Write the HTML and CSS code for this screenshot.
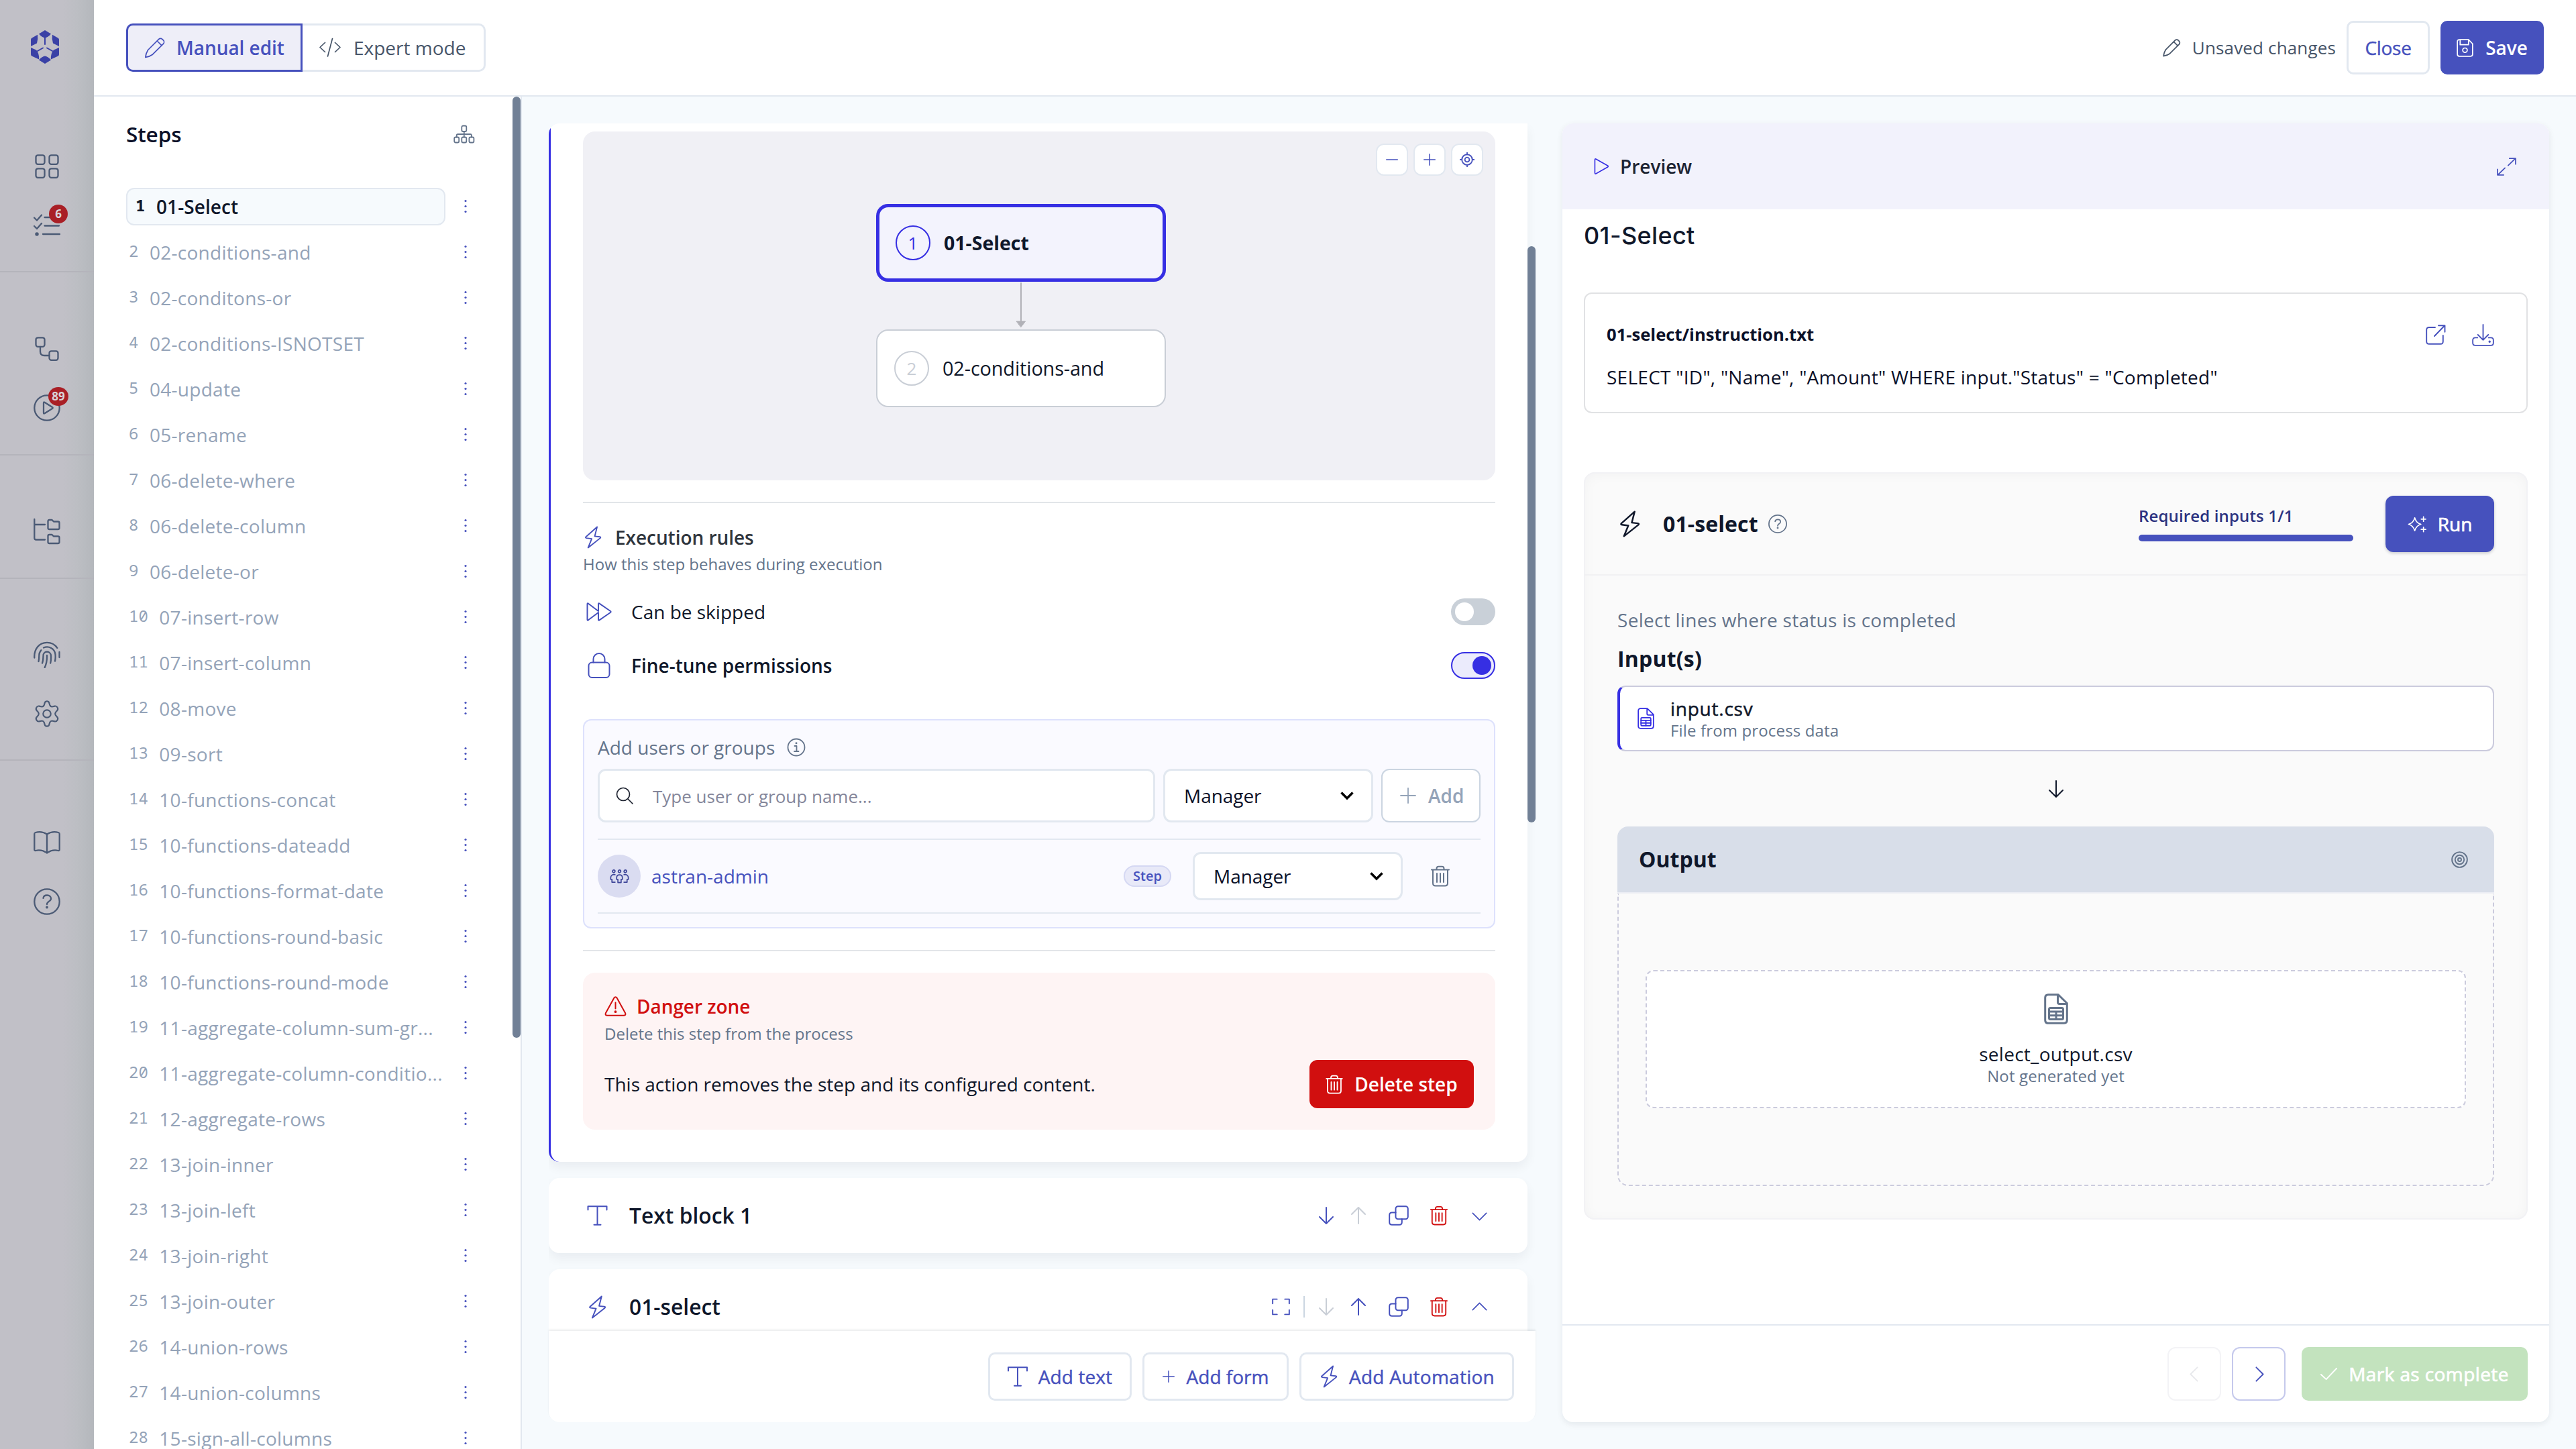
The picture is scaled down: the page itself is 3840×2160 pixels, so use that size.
FILE: index.html
```html
<!DOCTYPE html>
<html lang="en">
<head>
<meta charset="utf-8">
<title>Process editor</title>
<link rel="stylesheet" href="styles.css">
</head>
<body>
<svg class="defs" aria-hidden="true">
  <symbol id="pencil" viewBox="0 0 32 32"><path d="M21.500 3.600a3.900 3.900 0 0 1 5.600 0l1.300 1.300a3.900 3.900 0 0 1 0 5.500L12.500 26.200Q8 29.500 1.800 30.300 2.300 25 5.600 19.500zM19.200 6l6.900 6.800"/></symbol>
  <symbol id="code" viewBox="0 0 32 32"><path d="M8.500 8.500 1 15.500l7.500 7M23.500 8.500l7.500 7-7.500 7M19.500 2.500 12.500 29"/></symbol>
  <symbol id="tree" viewBox="0 0 32 28"><rect x="12.300" y="1.500" width="7" height="8.500" rx="2"/><rect x="1.200" y="18.500" width="7" height="8" rx="2"/><rect x="12.300" y="18.500" width="7" height="8" rx="2"/><rect x="23.400" y="18.500" width="7" height="8" rx="2"/><path d="M15.800 10v8.500M4.700 18.500v-2.500q0-2 2-2h18.200q2 0 2 2v2.500"/></symbol>
  <symbol id="dots" viewBox="0 0 8 22"><g fill="currentColor" stroke="none"><circle cx="4" cy="2.500" r="1.600"/><circle cx="4" cy="10.500" r="1.600"/><circle cx="4" cy="18.500" r="1.600"/></g></symbol>
  <symbol id="bolt" viewBox="0 0 32 36"><path d="M22.500 1.500 4.800 17.200q-1.500 1.500.8 2l8.400 1.100L8.200 34.500 27.500 19.200q1.500-1.500-.8-2l-8-.9z"/></symbol>
  <symbol id="plus" viewBox="0 0 24 24"><path d="M12 1v22M1 12h22"/></symbol>
  <symbol id="minus" viewBox="0 0 24 24"><path d="M1 12h22"/></symbol>
  <symbol id="locate" viewBox="0 0 24 24"><circle cx="12" cy="12" r="8.500"/><circle cx="12" cy="12" r="3.700"/><path d="M12 .5v3M12 20.500v3M.5 12h3M20.500 12h3"/></symbol>
  <symbol id="skip" viewBox="0 0 40 32"><path d="M2.500 4.500v23q0 1.800 1.500.8L19 17V27.500q0 1.800 1.500.8L37 17q1.200-1 0-2L20.500 3.700Q19 2.700 19 4.500V15L4 3.700Q2.500 2.700 2.500 4.500z"/></symbol>
  <symbol id="lock" viewBox="0 0 36 40"><rect x="2.500" y="15.500" width="31" height="22.500" rx="5"/><path d="M9.500 15.500V10.500a8.500 8.500 0 0 1 17 0v5"/></symbol>
  <symbol id="info" viewBox="0 0 28 28"><circle cx="14" cy="14" r="12.500"/><path d="M11.500 12h3v8M11 20h6.500"/><circle cx="14" cy="7.800" r=".6" fill="currentColor"/></symbol>
  <symbol id="search" viewBox="0 0 26 26"><circle cx="11" cy="11" r="9.500"/><path d="M18 18l7 7"/></symbol>
  <symbol id="caret" viewBox="0 0 20 14"><path d="M1.500 2.500 10 11l8.500-8.500"/></symbol>
  <symbol id="people" viewBox="0 0 30 22"><circle cx="6" cy="3" r="2"/><circle cx="15" cy="3" r="2"/><circle cx="24" cy="3" r="2"/><path d="M15 8.500c-3 0-4.500 2-4.500 4.500v2.500h2v5h5v-5h2V13c0-2.500-1.500-4.500-4.500-4.500zM8 8.200C4 7.500 1.200 9.500 1.200 13v2.500h2V20H8M22 8.200c4-.7 6.800 1.300 6.800 4.800v2.500h-2V20H22"/></symbol>
  <symbol id="trash" viewBox="0 0 28 32"><path d="M1 6.500h26M8.500 6.500V5q0-3.200 3-3.200h5q3 0 3 3.200v1.500M3 6.500v20q0 4 4 4h14q4 0 4-4v-20M9 12v13M14 12v13M19 12v13"/></symbol>
  <symbol id="warn" viewBox="0 0 32 30"><path d="M13.800 2.700q2.200-3 4.400 0L30.500 25q1.500 3.500-2 3.700H3.500Q0 28.500 1.500 25zM16 9.500v9"/><circle cx="16" cy="23.200" r=".9" fill="currentColor"/></symbol>
  <symbol id="letter" viewBox="0 0 30 30"><path d="M1 6.500V1.200h28V6.500M15 1.200v27.500M10 28.700h10"/></symbol>
  <symbol id="down" viewBox="0 0 22 26"><path d="M11 1v24M1 15l10 10 10-10"/></symbol>
  <symbol id="up" viewBox="0 0 22 26"><path d="M11 25V1M1 11 11 1l10 10"/></symbol>
  <symbol id="copy" viewBox="0 0 30 30"><rect x="10.500" y="1.200" width="18.300" height="19" rx="3.500"/><path d="M10.500 10.500H5q-3.800 0-3.800 3.800V25q0 3.800 3.800 3.800h11q3.800 0 3.800-3.800v-4.800"/></symbol>
  <symbol id="chev" viewBox="0 0 24 14"><path d="M1 1.500l11 11 11-11"/></symbol>
  <symbol id="frame" viewBox="0 0 28 26"><path d="M1.200 8V1.200H8M20 1.200h6.800V8M26.800 18v6.800H20M8 24.800H1.200V18"/></symbol>
  <symbol id="save" viewBox="0 0 26 28"><path d="M1.200 4.500q0-3.300 3.300-3.300h14l6.300 6.300V24q0 2.800-2.800 2.800H4Q1.200 26.800 1.200 24z"/><path d="M5.500 1.500V9h13V1.500"/><circle cx="13" cy="17.500" r="3.500"/></symbol>
  <symbol id="play" viewBox="0 0 24 26"><path d="M1.500 3v20q0 2.300 2 1.200L21.500 14q1.500-1 0-2L3.500 1.800Q1.500.7 1.500 3z"/></symbol>
  <symbol id="expand" viewBox="0 0 30 28"><path d="M19.500 1.200H29V10M28.500 1.500 17.500 12M1 18v8.800h9.500M1.500 26.500l11-10.500"/></symbol>
  <symbol id="external" viewBox="0 0 30 30"><path d="M14 4H5Q1.200 4 1.200 7.800V25q0 3.800 3.800 3.800h17q3.800 0 3.800-3.800V16M19 1.200h9.500v9.500M28 1.500 13 17"/></symbol>
  <symbol id="download" viewBox="0 0 34 34"><path d="M17 1v23M9 16.500l8 8 8-8M8.500 21H5q-3.800 0-3.800 3.800V29q0 3.800 3.800 3.800h24q3.800 0 3.800-3.800v-4.200Q32.800 21 29 21h-3.500"/><circle cx="27" cy="27" r=".8" fill="currentColor"/></symbol>
  <symbol id="help" viewBox="0 0 40 40"><circle cx="20" cy="20" r="18.700"/><path d="M14.500 14.800c.4-3 2.800-4.300 5.700-4.300 3.300 0 5.800 1.800 5.800 4.900 0 4.600-6 3.900-6 8.600"/><circle cx="20" cy="28.500" r=".8" fill="currentColor"/></symbol>
  <symbol id="sparkle" viewBox="0 0 30 28"><path d="M11 4c1.500 5.500 4 8.500 9.500 10-5.500 1.500-8 4.500-9.500 10-1.500-5.500-4-8.500-9.500-10C7 12.500 9.500 9.500 11 4zM24.500 2.500v7M21 6h7M24.500 18.500v7M21 22h7"/></symbol>
  <symbol id="sheet" viewBox="0 0 36 46"><path d="M1.700 6.500q0-4.800 4.800-4.800H21L34.300 14.500V39.500q0 4.800-4.800 4.800H6.500q-4.800 0-4.800-4.800zM20.500 1.700V13q0 2.500 2.500 2.500h11.300"/><rect x="7.500" y="21.500" width="21" height="17" rx="2"/><path d="M7.500 27h21M7.500 32.700h21M18 27v11.500"/></symbol>
  <symbol id="target" viewBox="0 0 26 26"><circle cx="13" cy="13" r="11.800"/><circle cx="13" cy="13" r="7"/><circle cx="13" cy="13" r="2.600"/></symbol>
  <symbol id="tick" viewBox="0 0 26 20"><path d="M1 11l8 7.500L25 1.500"/></symbol>
  <symbol id="grid" viewBox="0 0 40 40"><rect x="3.500" y="3.300" width="13" height="13.500" rx="3"/><rect x="23.500" y="3.300" width="13" height="13.500" rx="3"/><rect x="3.500" y="23.300" width="13" height="13.500" rx="3"/><rect x="23.500" y="23.300" width="13" height="13.500" rx="3"/></symbol>
  <symbol id="tasks" viewBox="0 0 40 40"><path d="M1 6.500l4 4 7-8M1 19l4 4 7-8M16.500 6H38M16.500 18.500H38M14 31h25"/><circle cx="5" cy="31" r="1.600" fill="currentColor"/></symbol>
  <symbol id="flow" viewBox="0 0 40 40"><rect x="3.500" y="3.300" width="13" height="13.500" rx="3"/><rect x="23.500" y="23.300" width="13" height="13.500" rx="3"/><path d="M10 16.800V24q0 6 6 6h7.500"/></symbol>
  <symbol id="playc" viewBox="0 0 40 40"><circle cx="20" cy="20" r="18.700"/><path d="M15 12.500v15q0 1.500 1.500.8L28 21q1.500-1 0-2l-11.500-7.300q-1.500-.7-1.500.8z"/></symbol>
  <symbol id="folders" viewBox="0 0 40 40"><path d="M1.300 2v28q0 2.500 2.500 2.500H17M1.300 10H17M21.500 5q0-2 2-2h4l2.500 2.500h6.500q2 0 2 2V15q0 2-2 2h-13q-2 0-2-2zM21.500 27q0-2 2-2h4l2.500 2.500h6.500q2 0 2 2V36q0 2-2 2h-13q-2 0-2-2z"/></symbol>
  <symbol id="finger" viewBox="0 0 40 40"><path d="M1.300 24.500C.5 12 8 1.800 20 1.800c6.500 0 12 3 15.300 8M38.500 16v8M7.500 30c.8-3 .8-5 .8-9 0-3.500 1-5.500 3-7.800M15 9.500c7.500-3 16.500 1 17.500 10 .3 4 .2 7-.5 10M13 32.500c1.500-4 1.500-7 1.500-11 0-8 11-8 11.500 0 .2 4 .1 7.500-.8 11M20 21c.3 7-1 13-3.300 18"/></symbol>
  <symbol id="gear" viewBox="0 0 40 42"><circle cx="20" cy="21" r="6"/><path d="M16.700 3.500q.7-2 3.300-2t3.300 2l1.200 4q.7 2 3.300 2.500l4.500-1q2.500-.5 4 2t0 4.500l-2.800 3.300q-1.300 2.200 0 4.400l2.800 3.300q1.500 2 0 4.500t-4 2l-4.500-1q-2.600.5-3.300 2.500l-1.200 4q-.7 2-3.300 2t-3.300-2l-1.200-4q-.7-2-3.300-2.500l-4.500 1q-2.500.5-4-2t0-4.500l2.800-3.300q1.300-2.200 0-4.400L3.700 15.500q-1.500-2 0-4.500t4-2l4.500 1q2.600-.5 3.300-2.500z"/></symbol>
  <symbol id="book" viewBox="0 0 40 40"><path d="M20 7.500Q12 2.500 3 5 1.300 5.500 1.300 7v23.500q0 2 2 1.500Q12 30 20 35.500q8-5.500 16.700-3.500 2 .5 2-1.500V7q0-1.500-1.700-2-9-2.500-17 2.500zV35"/></symbol>
  <symbol id="logo" viewBox="0 0 42 50"><g fill="currentColor" stroke="none"><path d="M12 5.500 21 0l9 5.500q-4 5-9 6-5-1-9-6zM0 14q0-1.500 1.300-2.300L10 6.800q1 6-1 12.700L0 24zM42 14q0-1.500-1.300-2.300L32 6.800q-1 6 1 12.700l9 4.500zM0 26l8 3.500q4.500 4.500 4.200 14L1.300 38.500Q0 37.500 0 36zM42 26l-8 3.500q-4.500 4.500-4.200 14L40.700 38.500Q42 37.500 42 36zM12 44.500l9 5.500 9-5.500q-4-5-9-6-5 1-9 6z"/></g><path d="M21 11v10M10 31l8-4.500M32 31l-8-4.500"/></symbol>
</svg>

<div class="app">
  <nav class="rail">
    <div class="rail-logo"><svg class="logo"><use href="#logo"/></svg></div>
    <div class="rail-group first">
      <span class="rail-item"><svg><use href="#grid"/></svg></span>
      <span class="rail-item tasks"><svg><use href="#tasks"/></svg><b class="badge">6</b></span>
    </div>
    <div class="rail-group second">
      <span class="rail-item"><svg><use href="#flow"/></svg></span>
      <span class="rail-item"><svg><use href="#playc"/></svg><b class="badge wide">89</b></span>
    </div>
    <div class="rail-group third">
      <span class="rail-item"><svg><use href="#folders"/></svg></span>
    </div>
    <div class="rail-group fourth">
      <span class="rail-item"><svg><use href="#finger"/></svg></span>
      <span class="rail-item"><svg><use href="#gear"/></svg></span>
    </div>
    <div class="rail-group fifth">
      <span class="rail-item"><svg><use href="#book"/></svg></span>
      <span class="rail-item"><svg><use href="#help"/></svg></span>
    </div>
  </nav>

  <div class="shell">
    <header class="topbar">
      <div class="modes">
        <button class="mode active"><svg class="i32"><use href="#pencil"/></svg><span>Manual edit</span></button>
        <button class="mode"><svg class="i32"><use href="#code"/></svg><span>Expert mode</span></button>
      </div>
      <div class="top-actions">
        <span class="unsaved"><svg class="i28"><use href="#pencil"/></svg><span>Unsaved changes</span></span>
        <button class="btn close">Close</button>
        <button class="btn save"><svg class="ic-save"><use href="#save"/></svg><span>Save</span></button>
      </div>
    </header>

    <div class="body">
      <aside class="steps">
        <div class="steps-head"><h2>Steps</h2><svg class="ic-tree"><use href="#tree"/></svg></div>
        <ol class="step-list">
          <li class="on"><div class="step"><i>1</i><span>01-Select</span></div><svg><use href="#dots"/></svg></li>
          <li><div class="step"><i>2</i><span>02-conditions-and</span></div><svg><use href="#dots"/></svg></li>
          <li><div class="step"><i>3</i><span>02-conditons-or</span></div><svg><use href="#dots"/></svg></li>
          <li><div class="step"><i>4</i><span>02-conditions-ISNOTSET</span></div><svg><use href="#dots"/></svg></li>
          <li><div class="step"><i>5</i><span>04-update</span></div><svg><use href="#dots"/></svg></li>
          <li><div class="step"><i>6</i><span>05-rename</span></div><svg><use href="#dots"/></svg></li>
          <li><div class="step"><i>7</i><span>06-delete-where</span></div><svg><use href="#dots"/></svg></li>
          <li><div class="step"><i>8</i><span>06-delete-column</span></div><svg><use href="#dots"/></svg></li>
          <li><div class="step"><i>9</i><span>06-delete-or</span></div><svg><use href="#dots"/></svg></li>
          <li><div class="step"><i>10</i><span>07-insert-row</span></div><svg><use href="#dots"/></svg></li>
          <li><div class="step"><i>11</i><span>07-insert-column</span></div><svg><use href="#dots"/></svg></li>
          <li><div class="step"><i>12</i><span>08-move</span></div><svg><use href="#dots"/></svg></li>
          <li><div class="step"><i>13</i><span>09-sort</span></div><svg><use href="#dots"/></svg></li>
          <li><div class="step"><i>14</i><span>10-functions-concat</span></div><svg><use href="#dots"/></svg></li>
          <li><div class="step"><i>15</i><span>10-functions-dateadd</span></div><svg><use href="#dots"/></svg></li>
          <li><div class="step"><i>16</i><span>10-functions-format-date</span></div><svg><use href="#dots"/></svg></li>
          <li><div class="step"><i>17</i><span>10-functions-round-basic</span></div><svg><use href="#dots"/></svg></li>
          <li><div class="step"><i>18</i><span>10-functions-round-mode</span></div><svg><use href="#dots"/></svg></li>
          <li><div class="step"><i>19</i><span>11-aggregate-column-sum-gr...</span></div><svg><use href="#dots"/></svg></li>
          <li><div class="step"><i>20</i><span>11-aggregate-column-conditio...</span></div><svg><use href="#dots"/></svg></li>
          <li><div class="step"><i>21</i><span>12-aggregate-rows</span></div><svg><use href="#dots"/></svg></li>
          <li><div class="step"><i>22</i><span>13-join-inner</span></div><svg><use href="#dots"/></svg></li>
          <li><div class="step"><i>23</i><span>13-join-left</span></div><svg><use href="#dots"/></svg></li>
          <li><div class="step"><i>24</i><span>13-join-right</span></div><svg><use href="#dots"/></svg></li>
          <li><div class="step"><i>25</i><span>13-join-outer</span></div><svg><use href="#dots"/></svg></li>
          <li><div class="step"><i>26</i><span>14-union-rows</span></div><svg><use href="#dots"/></svg></li>
          <li><div class="step"><i>27</i><span>14-union-columns</span></div><svg><use href="#dots"/></svg></li>
          <li><div class="step"><i>28</i><span>15-sign-all-columns</span></div><svg><use href="#dots"/></svg></li>
        </ol>
        <div class="thumb steps-thumb"></div>
      </aside>

      <main class="editor">
        <div class="scroll">
          <div class="cards">
            <section class="card settings">
              <div class="map">
                <div class="controls">
                  <button><svg class="i20"><use href="#minus"/></svg></button>
                  <button><svg class="i20"><use href="#plus"/></svg></button>
                  <button><svg class="i22"><use href="#locate"/></svg></button>
                </div>
                <div class="node current"><i>1</i><span>01-Select</span></div>
                <svg class="edge" viewBox="0 0 16 66"><path d="M8 0v58" stroke="#b1b1b7" stroke-width="2"/><path d="M1.500 57h13L8 65.500z" fill="#b1b1b7" stroke="#b1b1b7" stroke-width="1"/></svg>
                <div class="node next"><i>2</i><span>02-conditions-and</span></div>
              </div>
              <hr>
              <div class="rules-head"><svg class="ic-bolt"><use href="#bolt"/></svg><h3>Execution rules</h3></div>
              <p class="sub">How this step behaves during execution</p>
              <div class="rule"><svg class="ic-skip"><use href="#skip"/></svg><span>Can be skipped</span><b class="toggle"></b></div>
              <div class="rule strong"><svg class="ic-lock"><use href="#lock"/></svg><span>Fine-tune permissions</span><b class="toggle on"></b></div>
              <div class="perms">
                <div class="perm-label"><span>Add users or groups</span><svg class="i28"><use href="#info"/></svg></div>
                <div class="perm-form">
                  <div class="field search"><svg class="i26"><use href="#search"/></svg><span>Type user or group name...</span></div>
                  <div class="field select"><span>Manager</span><svg class="caret"><use href="#caret"/></svg></div>
                  <button class="field add"><svg><use href="#plus"/></svg><span>Add</span></button>
                </div>
                <div class="perm-row">
                  <span class="avatar"><svg><use href="#people"/></svg></span>
                  <span class="who">astran-admin</span>
                  <span class="pill">Step</span>
                  <div class="field select"><span>Manager</span><svg class="caret"><use href="#caret"/></svg></div>
                  <svg class="ic-trash"><use href="#trash"/></svg>
                </div>
              </div>
              <hr>
              <div class="danger">
                <div class="danger-head"><svg><use href="#warn"/></svg><h3>Danger zone</h3></div>
                <p class="sub">Delete this step from the process</p>
                <div class="danger-row"><span>This action removes the step and its configured content.</span><button class="btn delete"><svg><use href="#trash"/></svg><span>Delete step</span></button></div>
              </div>
            </section>

            <section class="card block">
              <svg class="ic-letter"><use href="#letter"/></svg><h3>Text block 1</h3>
              <div class="tools">
                <span class="t48"><svg class="arrow"><use href="#down"/></svg></span>
                <span class="t48 off"><svg class="arrow"><use href="#up"/></svg></span>
                <span class="t70"><svg class="i30"><use href="#copy"/></svg></span>
                <span class="t52 red"><svg class="bin"><use href="#trash"/></svg></span>
                <span class="t68"><svg class="chev"><use href="#chev"/></svg></span>
              </div>
            </section>

            <section class="card block">
              <svg class="ic-bolt2"><use href="#bolt"/></svg><h3>01-select</h3>
              <div class="tools">
                <span class="t68"><svg class="frame"><use href="#frame"/></svg></span>
                <span class="sep"></span>
                <span class="t48 off"><svg class="arrow"><use href="#down"/></svg></span>
                <span class="t48"><svg class="arrow"><use href="#up"/></svg></span>
                <span class="t70"><svg class="i30"><use href="#copy"/></svg></span>
                <span class="t52 red"><svg class="bin"><use href="#trash"/></svg></span>
                <span class="t68"><svg class="chev flip"><use href="#chev"/></svg></span>
              </div>
            </section>
          </div>
          <div class="thumb main-thumb"></div>
        </div>
        <footer class="adders">
          <button class="btn ghost text"><svg class="i30"><use href="#letter"/></svg><span>Add text</span></button>
          <button class="btn ghost form"><svg class="i20"><use href="#plus"/></svg><span>Add form</span></button>
          <button class="btn ghost auto"><svg class="ic-bolt"><use href="#bolt"/></svg><span>Add Automation</span></button>
        </footer>
      </main>

      <section class="preview">
        <div class="preview-head"><svg class="ic-play"><use href="#play"/></svg><span>Preview</span><svg class="ic-expand"><use href="#expand"/></svg></div>
        <div class="preview-body">
          <h1>01-Select</h1>
          <article class="file">
            <div class="file-head"><b>01-select/instruction.txt</b><svg class="i30"><use href="#external"/></svg><svg class="ic-dl"><use href="#download"/></svg></div>
            <p>SELECT "ID", "Name", "Amount" WHERE input."Status" = "Completed"</p>
          </article>
          <article class="run">
            <div class="run-head">
              <svg class="ic-bolt3"><use href="#bolt"/></svg>
              <h2>01-select</h2>
              <svg class="ic-help"><use href="#help"/></svg>
              <div class="required"><span>Required inputs 1/1</span><div class="bar"></div></div>
              <button class="btn go"><svg><use href="#sparkle"/></svg><span>Run</span></button>
            </div>
            <div class="run-body">
              <p class="desc">Select lines where status is completed</p>
              <h4>Input(s)</h4>
              <div class="input-file">
                <svg><use href="#sheet"/></svg>
                <div><b>input.csv</b><small>File from process data</small></div>
              </div>
              <div class="then"><svg class="arrow"><use href="#down"/></svg></div>
              <div class="out-head"><h4>Output</h4><svg><use href="#target"/></svg></div>
              <div class="out-body">
                <div class="out-file"><svg><use href="#sheet"/></svg><span>select_output.csv</span><small>Not generated yet</small></div>
              </div>
            </div>
          </article>
        </div>
        <footer class="preview-foot">
          <button class="nav prev"><svg><use href="#chev"/></svg></button>
          <button class="nav"><svg><use href="#chev"/></svg></button>
          <button class="btn mark"><svg><use href="#tick"/></svg><span>Mark as complete</span></button>
        </footer>
      </section>
    </div>
  </div>
</div>
</body>
</html>
```
FILE: styles.css
```css
* { box-sizing: border-box; margin: 0; padding: 0; }
body {
  width: 3840px; height: 2160px; overflow: hidden;
  font: 28px/40px "Open Sans", "Noto Sans", sans-serif;
  color: #0f172a; background: #f6fafd;
}
button { font: inherit; color: inherit; background: none; border: 0; }
h1, h2, h3, h4 { font-weight: 600; }
i { font-style: normal; }
svg { flex: none; display: block; fill: none; stroke: currentColor; stroke-width: 2; stroke-linecap: round; stroke-linejoin: round; overflow: visible; }
.defs { position: absolute; width: 0; height: 0; }
.i20 { width: 18px; height: 18px; }
.i22 { width: 22px; height: 22px; }
.i26 { width: 26px; height: 26px; }
.i28 { width: 28px; height: 28px; }
.i30 { width: 30px; height: 30px; }
.i32 { width: 32px; height: 32px; }
.app { display: flex; height: 2160px; }

/* navigation rail, dimmed behind the editor sheet */
.rail { width: 140px; flex: none; display: flex; flex-direction: column; color: #4b5a75; background: linear-gradient(90deg, #c1c0c7 94px, #bcbec3 116px, #b4b7bc); }
.rail-logo { height: 140px; padding: 45px 0 0 46px; color: #3a41a6; }
.logo { width: 42px; height: 50px; }
.rail-group { display: flex; flex-direction: column; align-items: center; border-bottom: 2px solid #b4b4bb; }
.rail-item { position: relative; width: 40px; height: 40px; }
.rail-item svg { width: 40px; height: 40px; stroke-width: 2.300; }
.first { height: 266px; padding-top: 88px; gap: 50px; }
.second { height: 273px; padding-top: 94px; gap: 48px; }
.third { height: 184px; padding-top: 93px; }
.fourth { height: 271px; padding-top: 93px; gap: 48px; }
.fifth { padding-top: 102px; gap: 48px; border: 0; }
.badge { position: absolute; left: 23px; top: -13px; width: 28px; height: 28px; border-radius: 50%; background: #a91f26; color: #d8d3d8; font-size: 17px; line-height: 28px; text-align: center; }
.badge.wide { left: 22px; top: -11px; width: 30px; }

.shell { width: 3700px; display: flex; flex-direction: column; }
.topbar { height: 144px; border-bottom: 2px solid #e2e8f0; background: #fff; display: flex; align-items: center; justify-content: space-between; padding: 0 48px; }
.modes { display: flex; height: 72px; }
.mode { display: flex; align-items: center; width: 273px; border: 3px solid #e2e8f0; border-left: 0; border-radius: 0 10px 10px 0; color: #475569; padding-left: 25px; gap: 19px; }
.mode.active { width: 263px; border: 3px solid #4651bd; border-radius: 10px 0 0 10px; color: #4651bd; background: #eeeef8; font-weight: 600; padding-left: 24px; gap: 16px; letter-spacing: -.05px; }
.mode svg { stroke-width: 1.700; }
.top-actions { display: flex; align-items: center; }
.unsaved { display: flex; align-items: center; gap: 16px; color: #475569; font-size: 26px; margin-right: 16px; letter-spacing: .15px; }
.unsaved svg { width: 29px; }
.btn { display: flex; align-items: center; justify-content: center; gap: 16px; height: 72px; border-radius: 10px; font-weight: 600; }
.close { width: 124px; height: 80px; border: 3px solid #e2e8f0; color: #4651bd; font-weight: 400; margin-right: 16px; -webkit-text-stroke: .4px; letter-spacing: -.3px; }
.save { width: 154px; height: 80px; background: #4651bd; color: #fff; gap: 18px; }
.ic-save { width: 25px; height: 27px; stroke-width: 1.800; }

.body { display: flex; height: 2016px; }

.steps { position: relative; width: 638px; flex: none; background: #fff; border-right: 2px solid #e2e8f0; overflow: hidden; }
.steps-head { height: 136px; display: flex; justify-content: space-between; padding: 36px 68px 0 48px; color: #64748b; }
.steps-head h2 { font-size: 31.500px; color: #0b1028; letter-spacing: -.1px; }
.ic-tree { width: 32px; height: 28px; margin-top: 6px; stroke-width: 1.800; }
.step-list { list-style: none; display: flex; flex-direction: column; gap: 12px; padding-left: 48px; }
.step-list li { display: flex; align-items: center; height: 56px; }
.step-list svg { width: 8px; height: 22px; margin-left: 26px; color: #4651bd; }
.step { width: 476px; height: 56px; padding-left: 4px; display: flex; align-items: center; gap: 16.500px; color: #94a3b8; white-space: nowrap; letter-spacing: .28px; }
.step i { font: 24px/40px "Noto Sans Mono", "DejaVu Sans Mono", monospace; letter-spacing: 0; margin-top: -4px; }
.on .step { border: 2px solid #e2e8f0; border-radius: 12px; background: #f6fafd; color: #0f172a; font-weight: 600; padding-left: 12px; gap: 16.500px; letter-spacing: .1px; }
.on .step i { font-weight: 700; }
.thumb { position: absolute; width: 12px; border-radius: 6px; background: #718096; }
.steps-thumb { right: 0; top: 0; height: 1403px; }

.editor { width: 1471px; flex: none; margin: 40px; display: flex; flex-direction: column; }
.scroll { position: relative; height: 1800px; overflow: hidden; border-radius: 16px 0 0 0; }
.cards { width: 1459px; display: flex; flex-direction: column; gap: 24px; }
.card { flex: none; background: #fff; border-radius: 16px; box-shadow: 0 8px 16px rgba(15, 23, 42, .055); }
.settings { height: 1548px; border-radius: 0 0 16px 16px; border-left: 3px solid #362fe3; padding: 12px 48px 0; }
.main-thumb { right: 0; top: 183px; height: 859px; }
hr { border: 0; height: 2px; background: #e2e5e9; margin: 32px 0; }

.map { position: relative; height: 520px; border-radius: 18px; background: #f0f0f5; }
.controls { display: flex; justify-content: flex-end; gap: 8px; padding: 18px 18px 0; }
.controls button { width: 48px; height: 48px; border: 2px solid #e2e8f0; border-radius: 12px; background: #fff; color: #4651bd; display: flex; align-items: center; justify-content: center; }
.node { position: absolute; left: 437px; width: 432px; height: 116px; border-radius: 18px; display: flex; align-items: center; background: #fff; border: 2px solid #c9ced6; font-size: 28.800px; padding-left: 25px; gap: 20px; letter-spacing: -.1px; }
.node i { width: 52px; height: 52px; border: 2px solid #c9ced6; border-radius: 50%; color: #c9ced6; text-align: center; line-height: 48px; font-size: 26px; }
.current { top: 108px; border: 5px solid #362fe3; background: #f3f3fd; font-size: 28.500px; font-weight: 700; padding-left: 24px; letter-spacing: 0; }
.current i { border-color: #362fe3; color: #362fe3; font-weight: 400; }
.next { top: 295px; }
.edge { position: absolute; left: 645px; top: 226px; width: 16px; height: 66px; }

.rules-head { display: flex; align-items: center; height: 40px; margin-top: -1px; color: #4651bd; gap: 18px; }
.rules-head h3 { font-size: 28px; color: #2f353d; letter-spacing: -.05px; margin-top: -1px; }
.ic-bolt { width: 30px; height: 34px; }
.sub { font-size: 24px; line-height: 38px; color: #64748b; }
.rules-head + .sub { margin: 1px 0 12px; }
.rule { height: 80px; display: flex; align-items: center; }
.rule svg { color: #4651bd; margin-left: 4px; width: 40px; margin-right: 28px; }
.rule .ic-lock { width: 36px; margin: 0 30px 0 6px; }
.ic-skip { height: 32px; }
.ic-lock { height: 40px; }
.strong { font-weight: 600; }
.toggle { margin-left: auto; width: 66px; height: 40px; border-radius: 20px; background: #c9d0d8; padding: 6px; display: flex; }
.toggle::after { content: ""; width: 28px; height: 28px; border-radius: 50%; background: #fff; }
.toggle.on { background: #ebebfc; border: 2px solid #362fe3; padding: 4px; justify-content: flex-end; }
.toggle.on::after { background: #362fe3; }

.perms { height: 312px; margin-top: 40px; border: 2px solid #dde1fc; border-radius: 12px; background: #fafaff; padding: 20px 20px 0; }
.perm-label { display: flex; align-items: center; gap: 18px; height: 40px; margin-bottom: 12px; color: #64748b; }
.perm-label svg { stroke-width: 1.800; }
.perm-form { display: flex; gap: 12px; height: 80px; margin-bottom: 24px; }
.field { flex: none; display: flex; align-items: center; border: 3px solid #e2e8f0; border-radius: 12px; background: #fff; }
.search { width: 831px; padding-left: 24px; gap: 29px; color: #84869a; font-size: 26px; }
.search span { padding-top: 2px; }
.search svg { color: #1e2330; stroke-width: 1.700; }
.select { width: 313px; justify-content: space-between; padding: 0 26px 0 28px; color: #0b1028; letter-spacing: -.05px; }
.caret { width: 20px; height: 14px; color: #000; stroke-width: 3.500; stroke-linecap: butt; stroke-linejoin: miter; }
.add { width: 148px; border: 2px solid #cbd5e1; color: #94a3b8; font-weight: 600; padding-left: 26px; gap: 18px; }
.add svg { width: 24px; height: 24px; stroke-width: 1.800; }
.perm-row { display: flex; align-items: center; height: 112px; border: solid #e2e8f0; border-width: 2px 0; }
.avatar { width: 64px; height: 64px; border-radius: 50%; background: #dadcf1; color: #3f4699; display: flex; align-items: center; justify-content: center; }
.avatar svg { width: 29px; height: 21px; stroke-width: 1.800; }
.who { margin: 0 auto 0 16px; color: #4651bd; }
.pill { width: 71px; height: 32px; border: 2px solid #d5d8f3; border-radius: 16px; background: #e8e9f8; color: #4651bd; font-size: 20px; line-height: 28px; font-weight: 600; text-align: center; margin-right: 32px; }
.perm-row .select { height: 72px; }
.ic-trash { width: 28px; height: 32px; color: #64748b; margin: 0 46px 0 42px; }

.danger { height: 234px; border-radius: 18px; background: #fef4f4; padding: 30px 32px 0; }
.danger-head { display: flex; align-items: center; gap: 15px; color: #d10f0f; }
.danger-head h3 { font-size: 28px; letter-spacing: -.05px; }
.danger-head svg { width: 33px; height: 30px; }
.danger .sub { margin: 2px 0 20px; }
.danger-row { display: flex; align-items: center; justify-content: space-between; }
.delete { width: 245px; background: #d10f0f; color: #fff; border-radius: 12px; gap: 17px; }
.delete svg { width: 26px; height: 29px; }

.block { height: 112px; display: flex; align-items: center; padding: 0 38px 0 57px; color: #4651bd; }
.block h3 { font-size: 31.700px; color: #0f172a; margin-left: 32px; letter-spacing: .05px; }
.block .ic-letter { width: 31px; height: 30px; }
.ic-bolt2 { width: 31px; height: 35px; }
.tools { display: flex; align-items: center; margin-left: auto; height: 32px; }
.tools span { display: flex; justify-content: center; }
.tools .t48 { width: 48px; } .tools .t52 { width: 52px; } .tools .t68 { width: 68px; } .tools .t70 { width: 70px; padding-left: 1px; }
.tools .off { color: #c9ced6; }
.tools .red { color: #d10f0f; }
.tools .sep { width: 2px; height: 32px; background: #cbd5e1; margin-right: 8px; }
.arrow { width: 22px; height: 26px; }
.bin { width: 26px; height: 30px; }
.chev { width: 23px; height: 13px; margin-top: 2px; stroke-width: 1.800; }
.flip { transform: rotate(180deg); margin-top: -1px; }
.frame { width: 27px; height: 26px; margin-left: 1px; }

.adders { position: relative; height: 136px; background: #fff; border-radius: 0 0 16px 16px; display: flex; align-items: center; justify-content: flex-end; gap: 16px; padding-right: 32px; box-shadow: 0 -2px 3px rgba(15, 23, 42, .08); }
.ghost { border: 3px solid #e2e8f0; color: #4651bd; font-weight: 400; -webkit-text-stroke: .4px; }
.text { width: 214px; letter-spacing: .1px; }
.form { width: 218px; gap: 18px; }
.auto { width: 320px; letter-spacing: .25px; gap: 15px; }

.preview { width: 1471px; flex: none; margin: 40px 0; background: #fff; border-radius: 16px; box-shadow: 0 3px 10px rgba(15, 23, 42, .08); display: flex; flex-direction: column; overflow: hidden; }
.preview-head { height: 128px; background: #f2f2fc; display: flex; align-items: center; padding: 0 49px 0 47px; font-weight: 600; color: #1d2433; }
.ic-play { width: 23px; height: 26px; color: #362fe3; margin-right: 16px; stroke-width: 1.700; }
.ic-expand { width: 29px; height: 27px; color: #4651bd; margin-left: auto; stroke-width: 1.800; }
.preview-body { height: 1662px; padding: 15px 32px 0; }
h1 { font: 500 36px/48px Inter, sans-serif; color: #0f172a; margin-bottom: 61px; letter-spacing: .35px; }
.file { height: 180px; border: 2px solid #e1e2e4; border-radius: 12px; padding: 37px 48px 0 32px; margin-bottom: 88px; }
.file-head { display: flex; align-items: center; height: 48px; color: #4651bd; }
.file-head b { font-size: 25.600px; color: #0b1028; margin-right: auto; }
.file-head svg { stroke-width: 1.900; }
.ic-dl { width: 33px; height: 33px; margin-left: 39px; }
.file p { margin-top: 19px; letter-spacing: .27px; color: #0b1028; }
.run { height: 1114px; border-radius: 16px; background: #fafafa; box-shadow: inset 0 0 0 2px #f2f2f5, inset 0 2px 20px rgba(15, 23, 42, .04); }
.run-head { height: 154px; border-bottom: 2px solid #f1f1f3; display: flex; align-items: center; padding: 2px 50px 0; }
.ic-bolt3 { width: 37px; height: 40px; margin-right: 31px; stroke-width: 2.200; }
.run-head h2 { font-size: 32px; font-weight: 700; letter-spacing: .1px; }
.ic-help { width: 28px; height: 28px; margin-left: 15px; color: #64748b; stroke-width: 2.500; }
.required { width: 320px; margin-left: auto; color: #2b3280; font-size: 24px; line-height: 34px; font-weight: 600; letter-spacing: .15px; margin-top: -4px; }
.bar { height: 10px; border-radius: 5px; background: #4651bd; margin-top: 11px; }
.go { width: 162px; height: 84px; margin-left: 48px; background: #4651bd; color: #fff; border-radius: 12px; box-shadow: 0 2px 4px rgba(15, 23, 42, .2); gap: 16px; font-weight: 400; -webkit-text-stroke: .7px; }
.go svg { width: 29px; height: 27px; stroke-width: 1.800; }
.run-body { padding: 46px 50px 0; }
.desc { color: #64748b; letter-spacing: .28px; }
h4 { font-size: 32px; font-weight: 700; }
.run-body > h4 { margin: 18px 0; height: 42px; letter-spacing: .2px; }
.input-file { height: 98px; border: 2px solid #cbcbdd; border-left: 4px solid #362fe3; border-radius: 12px; background: #fff; display: flex; align-items: center; padding-left: 26px; color: #362fe3; }
.input-file svg { width: 25px; height: 32px; stroke-width: 2.600; margin-right: 24px; }
.input-file b { display: block; font-weight: 400; font-size: 28px; line-height: 36px; color: #0f172a; letter-spacing: .75px; -webkit-text-stroke: .5px; }
small { display: block; font-size: 24px; line-height: 30px; color: #64748b; letter-spacing: .15px; }
.then { height: 112px; display: flex; align-items: center; justify-content: center; }
.out-head { height: 100px; background: #d8dee9; border-bottom: 2px solid #eceef4; border-radius: 16px 16px 0 0; display: flex; align-items: center; justify-content: space-between; padding: 0 39px 0 32px; color: #64748b; }
.out-head h4 { color: #0f172a; }
.out-head svg { width: 25px; height: 25px; }
.out-body { height: 436px; border: 2px dashed #cbcbdd; border-top: 0; border-radius: 0 0 16px 16px; padding: 114px 40px 0; }
.out-file { height: 206px; border: 2px dashed #cbcbdd; border-radius: 12px; background: #fff; display: flex; flex-direction: column; align-items: center; padding-top: 33px; letter-spacing: .28px; }
.out-file svg { width: 36px; height: 46px; color: #64748b; stroke-width: 3; margin-bottom: 26px; }
.out-file span { line-height: 36px; }

.preview-foot { height: 146px; border-top: 2px solid #e2e8f0; display: flex; align-items: center; justify-content: flex-end; padding-right: 32px; }
.nav { width: 80px; height: 80px; border: 2px solid #c5c9ec; border-radius: 12px; color: #4651bd; display: flex; align-items: center; justify-content: center; }
.nav svg { width: 23px; height: 13px; margin-left: 2px; transform: rotate(-90deg); }
.nav.prev { border-color: #f3f3f6; color: #e8e9ec; margin-right: 16px; }
.prev svg { margin: 0 2px 0 0; transform: rotate(90deg); }
.mark { width: 337px; height: 80px; margin-left: 24px; background: #c3e3be; color: #fff; gap: 17px; letter-spacing: .4px; font-weight: 400; -webkit-text-stroke: .7px; }
.mark svg { width: 25px; height: 20px; }
```
